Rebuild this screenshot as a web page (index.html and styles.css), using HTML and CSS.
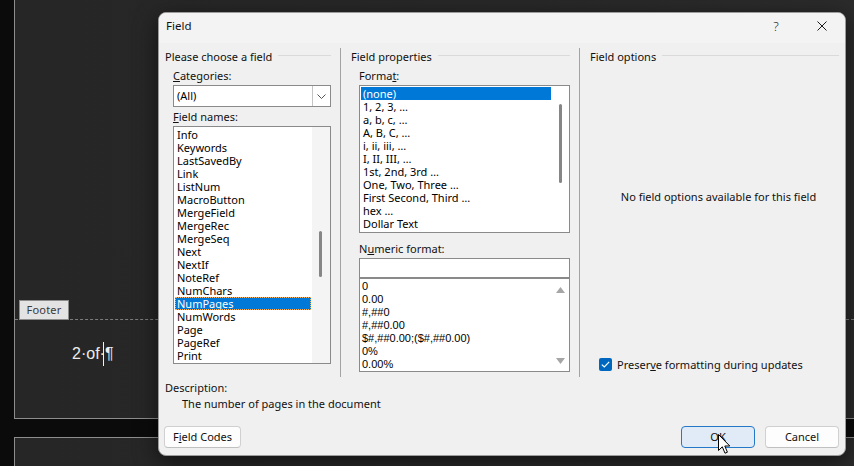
FILE: index.html
```html
<!DOCTYPE html>
<html>
<head>
<meta charset="utf-8">
<title>Field</title>
<link rel="stylesheet" href="styles.css">
</head>
<body>
<div class="desk">
  <div class="page page-one">
    <div class="footer-bar"><span class="footer-tag">Footer</span></div>
    <div class="footer-text">2·of·<span class="caret"></span>¶</div>
  </div>
  <div class="page page-two"></div>
</div>

<div class="dialog">
  <div class="titlebar">
    <span class="title">Field</span>
    <span class="cap-btn help">?</span>
    <span class="cap-btn close"><svg width="10" height="10" viewBox="0 0 10 10"><path d="M0.5 0.5 L9.5 9.5 M9.5 0.5 L0.5 9.5" stroke="#1b1b1b" stroke-width="1" fill="none"/></svg></span>
  </div>
  <div class="dlg-body">
    <div class="groups">
      <section class="group g1">
        <div class="ghead"><span>Please choose a field</span><i class="rule"></i></div>
        <div class="lbl"><u>C</u>ategories:</div>
        <div class="combo">
          <span class="combo-val">(All)</span>
          <span class="combo-btn"><svg width="9" height="5" viewBox="0 0 9 5"><path d="M0.5 0.5 L4.5 4.5 L8.5 0.5" stroke="#555" stroke-width="1" fill="none"/></svg></span>
        </div>
        <div class="lbl"><u>F</u>ield names:</div>
        <div class="listbox names">
          <ul class="items">
            <li>Info</li>
            <li>Keywords</li>
            <li>LastSavedBy</li>
            <li>Link</li>
            <li>ListNum</li>
            <li>MacroButton</li>
            <li>MergeField</li>
            <li>MergeRec</li>
            <li>MergeSeq</li>
            <li>Next</li>
            <li>NextIf</li>
            <li>NoteRef</li>
            <li>NumChars</li>
            <li class="sel focus">NumPages</li>
            <li>NumWords</li>
            <li>Page</li>
            <li>PageRef</li>
            <li>Print</li>
          </ul>
          <div class="vscroll grey"><span class="thumb names-thumb"></span></div>
        </div>
      </section>

      <section class="group g2">
        <div class="ghead"><span>Field properties</span><i class="rule"></i></div>
        <div class="lbl">Forma<u>t</u>:</div>
        <div class="listbox formats">
          <ul class="items">
            <li class="sel">(none)</li>
            <li>1, 2, 3, …</li>
            <li>a, b, c, …</li>
            <li>A, B, C, …</li>
            <li>i, ii, iii, …</li>
            <li>I, II, III, …</li>
            <li>1st, 2nd, 3rd …</li>
            <li>One, Two, Three …</li>
            <li>First Second, Third …</li>
            <li>hex …</li>
            <li>Dollar Text</li>
          </ul>
          <div class="vscroll"><span class="thumb formats-thumb"></span></div>
        </div>
        <div class="lbl lbl-num">N<u>u</u>meric format:</div>
        <div class="numinput"></div>
        <div class="listbox numerics">
          <ul class="items">
            <li>0</li>
            <li>0.00</li>
            <li>#,##0</li>
            <li>#,##0.00</li>
            <li>$#,##0.00;($#,##0.00)</li>
            <li>0%</li>
            <li>0.00%</li>
          </ul>
          <div class="vscroll arrows">
            <svg width="9" height="6" viewBox="0 0 9 6"><path d="M0 6 L4.5 0 L9 6 Z" fill="#a6a6a6"/></svg>
            <svg width="9" height="6" viewBox="0 0 9 6"><path d="M0 0 L4.5 6 L9 0 Z" fill="#a6a6a6"/></svg>
          </div>
        </div>
      </section>

      <section class="group g3">
        <div class="ghead"><span>Field options</span><i class="rule"></i></div>
        <div class="no-options">No field options available for this field</div>
        <div class="check-row">
          <span class="checkbox"><svg width="9" height="7" viewBox="0 0 9 7"><path d="M0.8 3.6 L3.3 6 L8.2 0.8" stroke="#fff" stroke-width="1.2" fill="none"/></svg></span>
          <span class="check-label">Preser<u>v</u>e formatting during updates</span>
        </div>
      </section>
    </div>

    <div class="desc-label">Description:</div>
    <div class="desc-text">The number of pages in the document</div>

    <div class="buttons">
      <span class="btn btn-codes">F<u>i</u>eld Codes</span>
      <span class="spacer"></span>
      <span class="btn btn-ok">OK</span>
      <span class="btn btn-cancel">Cancel</span>
    </div>
  </div>
  <svg class="pointer" width="13" height="21" viewBox="0 0 13 21"><path d="M0.5 0.5 L0.5 16.5 L4.3 12.8 L7 19.2 L9.4 18.2 L6.8 12 L11.8 12 Z" fill="#fff" stroke="#000" stroke-width="1" stroke-linejoin="miter"/></svg>
</div>
</body>
</html>
```

FILE: styles.css
```css
html, body {
  margin: 0;
  padding: 0;
}

body {
  width: 854px;
  height: 466px;
  overflow: hidden;
  background: #0b0b0b;
  position: relative;
  font-family: "Noto Sans", "Open Sans", sans-serif;
}

/* ---------- background document ---------- */
.desk {
  padding-left: 14px;
  height: 466px;
  box-sizing: border-box;
}

.page {
  background: linear-gradient(90deg, #262626 0%, #282828 60%, #2b2b2b 100%);
  border-left: 1px solid #8d8d8d;
}

.page-one {
  height: 419px;
  box-sizing: border-box;
  border-bottom: 1px solid #8d8d8d;
  overflow: hidden;
}

.page-two {
  margin-top: 18px;
  height: 40px;
  border-top: 1px solid #8d8d8d;
}

.footer-bar {
  margin-top: 300px;
  height: 19px;
  padding-left: 4px;
  border-bottom: 1px dashed #7c7c7c;
  display: flex;
}

.footer-tag {
  box-sizing: border-box;
  width: 50px;
  height: 20px;
  background: #e3e3e3;
  border: 1px solid #8c8c8c;
  color: #3a3a3a;
  font-size: 11px;
  line-height: 18px;
  text-align: center;
  letter-spacing: 0.2px;
}

.footer-text {
  margin-top: 22px;
  padding-left: 57px;
  font-family: "Liberation Sans", Arial, sans-serif;
  font-size: 16px;
  line-height: 20px;
  color: #ececec;
  display: flex;
  align-items: center;
}

.caret {
  display: inline-block;
  width: 1px;
  height: 24px;
  background: #f2f2f2;
  margin: 0 1px 0 -2px;
}

/* ---------- dialog ---------- */
.dialog {
  position: absolute;
  left: 158px;
  top: 12px;
  width: 688px;
  height: 444px;
  box-sizing: border-box;
  border: 1px solid #9c9c9c;
  border-radius: 8px;
  background: #f0f0f0;
  overflow: hidden;
  color: #000;
  font-size: 11px;
  box-shadow: 0 6px 22px rgba(0, 0, 0, 0.55);
}

.titlebar {
  height: 30px;
  box-sizing: border-box;
  padding-bottom: 5px;
  display: flex;
  align-items: center;
  background: #f3f3f3;
}

.title {
  flex: 1;
  padding-left: 7px;
  font-size: 11.5px;
  color: #111;
}

.cap-btn {
  width: 46px;
  height: 25px;
  display: flex;
  align-items: center;
  justify-content: center;
  color: #1b1b1b;
}

.help {
  font-size: 13px;
  font-weight: 300;
}

.dlg-body {
  padding: 5px 6px 7px 6px;
}

.groups {
  display: grid;
  grid-template-columns: 176px 239px 1fr;
  height: 329px;
}

.group {
  display: flex;
  flex-direction: column;
  min-width: 0;
}

.g1 {
  padding-right: 9px;
  border-right: 1px solid #a3a3a3;
}

.g2 {
  padding: 0 9px 0 10px;
  border-right: 1px solid #a3a3a3;
}

.g3 {
  padding-left: 10px;
}

.ghead {
  display: flex;
  height: 18px;
  line-height: 18px;
  white-space: nowrap;
  color: #111;
}

.rule {
  flex: 1;
  height: 1px;
  margin: 7px 0 0 6px;
  background: #dadada;
}

.lbl {
  margin: 2px 0 0 8px;
  line-height: 16px;
  color: #111;
}

.lbl-num {
  margin-top: 8px;
}

.combo {
  margin: 1px 0 0 8px;
  height: 22px;
  box-sizing: border-box;
  border: 1px solid #8a8a8a;
  background: #fff;
  display: flex;
}

.combo-val {
  flex: 1;
  padding-left: 3px;
  line-height: 20px;
}

.combo-btn {
  width: 17px;
  border-left: 1px solid #c4c4c4;
  display: flex;
  align-items: center;
  justify-content: center;
}

.listbox {
  margin: 1px 0 0 8px;
  box-sizing: border-box;
  border: 1px solid #8a8a8a;
  background: #fff;
  display: flex;
  overflow: hidden;
}

.names {
  height: 238px;
  width: 158px;
}

.formats {
  height: 148px;
  width: 211px;
}

.items {
  flex: 1;
  margin: 0;
  padding: 1px;
  list-style: none;
  min-width: 0;
}

.items li {
  height: 13px;
  line-height: 13px;
  padding-left: 2px;
  white-space: nowrap;
  color: #000;
}

.items li.sel {
  background: #0078d7;
  color: #fff;
}

.items li.focus {
  outline: 1px dotted #f3b36a;
  outline-offset: -1px;
}

.vscroll {
  width: 17px;
  display: flex;
  flex-direction: column;
}

.vscroll.grey {
  width: 18px;
  background: #f4f4f4;
}

.thumb {
  display: block;
  width: 3px;
  border-radius: 2px;
  background: #868686;
}

.names-thumb {
  margin: 104px 0 0 7px;
  height: 46px;
}

.formats-thumb {
  margin: 18px 0 0 7px;
  height: 79px;
}

.numinput {
  margin: 1px 0 0 8px;
  width: 211px;
  height: 20px;
  box-sizing: border-box;
  border: 1px solid #8a8a8a;
  background: #fff;
}

.numerics {
  margin-top: 0;
  width: 211px;
  height: 94px;
}

.numerics .items li {
  font-family: "Liberation Sans", Arial, sans-serif;
  font-size: 11px;
  padding-left: 1px;
}

.vscroll.arrows {
  align-items: center;
  justify-content: space-between;
  padding: 8px 0 7px 0;
  box-sizing: border-box;
}

.no-options {
  margin-top: 123px;
  padding-left: 8px;
  line-height: 16px;
  text-align: center;
  color: #111;
}

.check-row {
  margin: auto 0 6px 9px;
  display: flex;
  align-items: center;
  height: 13px;
}

.checkbox {
  width: 13px;
  height: 13px;
  box-sizing: border-box;
  border-radius: 2px;
  background: #0067c0;
  display: flex;
  align-items: center;
  justify-content: center;
}

.check-label {
  margin-left: 5px;
  line-height: 13px;
  color: #111;
}

.desc-label {
  margin-top: 3px;
  line-height: 16px;
  color: #111;
}

.desc-text {
  padding-left: 17px;
  line-height: 16px;
  color: #111;
}

.buttons {
  margin-top: 14px;
  height: 22px;
  display: flex;
  gap: 10px;
}

.btn {
  box-sizing: border-box;
  height: 22px;
  border: 1px solid #d0d0d0;
  border-bottom-color: #c0c0c0;
  border-radius: 4px;
  background: #fdfdfd;
  line-height: 20px;
  text-align: center;
  color: #111;
}

.btn-codes {
  width: 77px;
  margin-left: -1px;
}

.spacer {
  flex: 1;
  margin-left: -10px;
}

.btn-ok {
  width: 74px;
  background: #e0ebf7;
  border: 1px solid #2478c8;
}

.btn-cancel {
  width: 74px;
}

.pointer {
  position: absolute;
  left: 559px;
  top: 421px;
}
```
